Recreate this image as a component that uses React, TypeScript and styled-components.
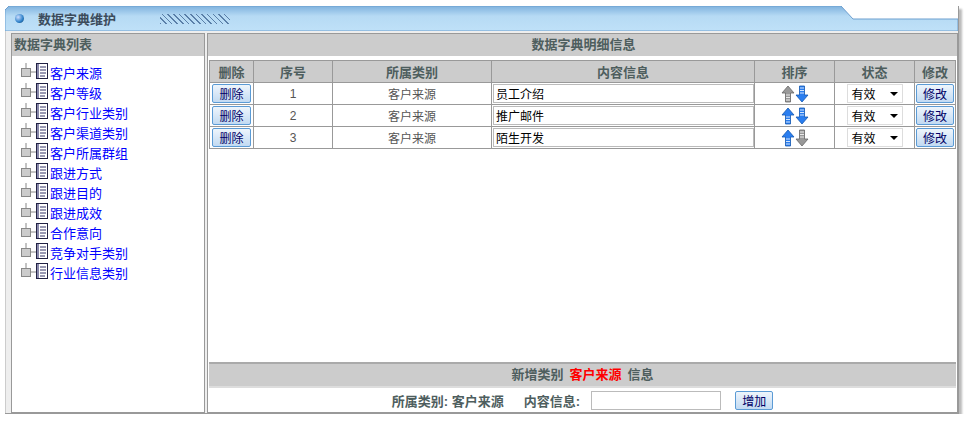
import React from 'react';
import styled, { createGlobalStyle } from 'styled-components';

const Global = createGlobalStyle`
  body { margin: 0; background: #fff; font-family: "Liberation Sans", "Noto Sans CJK SC", sans-serif; font-size: 12px; }
`;

const rows = [
  { id: 1, type: '客户来源', content: '员工介绍', up: false, down: true },
  { id: 2, type: '客户来源', content: '推广邮件', up: true, down: true },
  { id: 3, type: '客户来源', content: '陌生开发', up: true, down: false },
];

const treeItems = ['客户来源', '客户等级', '客户行业类别', '客户渠道类别', '客户所属群组', '跟进方式', '跟进目的', '跟进成效', '合作意向', '竞争对手类别', '行业信息类别'];

const Frame = styled.div`
  margin: 6px 0 0 5px;
  width: 953px;
  height: 407px;
  border-right: 1px solid #999;
  border-bottom: 1px solid #999;
  box-shadow: 3px 3px 2px #bbb;
  display: flex;
  flex-direction: column;
  overflow: hidden;
`;

const TitleBar = styled.div`
  height: 25px;
  position: relative;
  display: flex;
  align-items: center;
  padding-left: 10px;
  gap: 10px;
  background: #fff;
`;

const TitleTab = styled.svg`
  position: absolute;
  left: 0;
  top: 0;
  width: 953px;
  height: 25px;
`;

const Orb = styled.div`
  position: relative;
  width: 9px;
  height: 9px;
  border-radius: 50%;
  background: radial-gradient(circle at 35% 35%, #cdf, #2a7fc8 60%, #135);
`;

const TitleText = styled.span`
  position: relative;
  font-weight: bold;
  font-size: 13px;
  color: #3c4c5c;
  margin-left: 4px;
`;

const Hatch = styled.div`
  position: relative;
  margin-left: 34px;
  width: 70px;
  height: 10px;
  background: repeating-linear-gradient(45deg, #5a7fa8 0 1px, transparent 1px 4px);
`;

const Body = styled.div`
  flex: 1;
  display: flex;
  gap: 2px;
  padding: 2px 0 0 5px;
  background: #eee;
  border-left: 1px solid #ccc;
`;

const Panel = styled.div<{ w?: number }>`
  ${(p) => (p.w ? `width: ${p.w}px;` : 'flex: 1;')}
  border: 1px solid #999;
  background: #fff;
  display: flex;
  flex-direction: column;
`;

const PanelHead = styled.div<{ center?: boolean }>`
  height: 22px;
  line-height: 22px;
  background: #ccc;
  border-bottom: 2px solid #fff;
  font-weight: bold;
  font-size: 13px;
  color: #4e5e5e;
  padding-left: 2px;
  text-align: ${(p) => (p.center ? 'center' : 'left')};
`;

const Tree = styled.div`
  padding: 4px 0 0 8px;
`;

const TreeRow = styled.div`
  height: 20px;
  display: flex;
  align-items: center;
  color: #00f;
  font-size: 13px;
`;

const Table = styled.table`
  border-collapse: collapse;
  margin: 2px 0 0 1px;
  width: calc(100% - 2px);
  td, th { border: 1px solid #999; padding: 0; height: 21px; }
`;

const Th = styled.th`
  background: #ccc;
  color: #4e5e5e;
  font-size: 13px;
`;

const Td = styled.td`
  text-align: center;
  color: #555;
`;

const Btn = styled.button`
  font-family: inherit;
  font-size: 12px;
  color: #000066;
  height: 19px;
  padding: 0 6px;
  border: 1px solid #5b9bd5;
  border-radius: 2px;
  background: linear-gradient(#eef5fc, #c2daf2);
`;

const TextBox = styled.input`
  width: 255px;
  height: 17px;
  border: 1px solid #bbb;
  font-size: 12px;
  font-family: inherit;
  padding: 0 2px;
  display: block;
  margin-left: 1px;
`;

const Sel = styled.div`
  margin: 0 auto;
  width: 46px;
  height: 17px;
  border: 1px solid #ddd;
  display: flex;
  align-items: center;
  justify-content: space-between;
  padding: 0 4px;
  color: #000;
  &::after { content: ''; border: 4px solid transparent; border-top: 4px solid #000; margin-top: 4px; }
`;

const Spacer = styled.div`
  flex: 1;
`;

const AddBar = styled.div`
  border-top: 2px solid #aaa;
  margin: 0 1px;
`;

const AddHead = styled.div`
  height: 22px;
  line-height: 22px;
  background: #ccc;
  text-align: center;
  font-weight: bold;
  font-size: 13px;
  color: #4e5e5e;
  border-bottom: 2px solid #ddd;
`;

const Red = styled.span`
  color: #f00;
  margin: 0 6px;
`;

const AddForm = styled.div`
  height: 24px;
  display: flex;
  align-items: center;
  justify-content: center;
  gap: 10px;
  font-weight: bold;
  font-size: 13px;
  color: #4e5e5e;
`;

const Arrow = ({ dir, on }: { dir: 'up' | 'down'; on: boolean }) => {
  const c = on ? '#2a7ef0' : '#999';
  return (
    <svg width="14" height="18" viewBox="0 0 14 18" style={{ verticalAlign: 'middle' }}>
      <g transform={dir === 'down' ? 'rotate(180 7 9)' : undefined}>
        <path d="M7 1 L13 8 H9.5 V17 H4.5 V8 H1 Z" fill={c} stroke={on ? '#1458b0' : '#666'} strokeWidth="0.8" />
        <path d="M5 10 H9 M5 12.5 H9 M5 15 H9" stroke="#fff" strokeWidth="0.8" />
      </g>
    </svg>
  );
};

const DocIcon = () => (
  <svg width="30" height="18" viewBox="0 0 30 18">
    <path d="M6 0 V9 H16" stroke="#888" fill="none" />
    <rect x="1.5" y="5.5" width="9" height="8" fill="#ccc" stroke="#888" />
    <rect x="16.5" y="0.5" width="11" height="15" fill="#fff" stroke="#224" />
    <rect x="17" y="1" width="2" height="14" fill="#88a" />
    <path d="M20 4 H26 M20 7 H26 M20 10 H26 M20 13 H25" stroke="#336" />
  </svg>
);

export default function App() {
  return (
    <Frame>
      <Global />
      <TitleBar>
        <TitleTab viewBox="0 0 953 25" preserveAspectRatio="none">
          <defs>
            <linearGradient id="tb" x1="0" y1="0" x2="0" y2="1">
              <stop offset="0" stopColor="#7fb2de" />
              <stop offset="0.4" stopColor="#b6daf4" />
              <stop offset="1" stopColor="#bfe1f8" />
            </linearGradient>
          </defs>
          <path d="M4 0 H836 L848 13 H953 V25 H0 V4 Z" fill="url(#tb)" stroke="#6d9fcf" />
        </TitleTab>
        <Orb />
        <TitleText>数据字典维护</TitleText>
        <Hatch />
      </TitleBar>
      <Body>
        <Panel w={192}>
          <PanelHead>数据字典列表</PanelHead>
          <Tree>
            {treeItems.map((t) => (
              <TreeRow key={t}>
                <DocIcon />
                <span>{t}</span>
              </TreeRow>
            ))}
          </Tree>
        </Panel>
        <Panel>
          <PanelHead center>数据字典明细信息</PanelHead>
          <Table>
            <thead>
              <tr>
                <Th style={{ width: 43 }}>删除</Th>
                <Th style={{ width: 78 }}>序号</Th>
                <Th style={{ width: 158 }}>所属类别</Th>
                <Th style={{ width: 260 }}>内容信息</Th>
                <Th style={{ width: 79 }}>排序</Th>
                <Th style={{ width: 79 }}>状态</Th>
                <Th>修改</Th>
              </tr>
            </thead>
            <tbody>
              {rows.map((r) => (
                <tr key={r.id}>
                  <Td><Btn>删除</Btn></Td>
                  <Td>{r.id}</Td>
                  <Td>{r.type}</Td>
                  <Td><TextBox defaultValue={r.content} /></Td>
                  <Td><Arrow dir="up" on={r.up} /><Arrow dir="down" on={r.down} /></Td>
                  <Td><Sel>有效</Sel></Td>
                  <Td><Btn>修改</Btn></Td>
                </tr>
              ))}
            </tbody>
          </Table>
          <Spacer />
          <AddBar>
            <AddHead>新增类别<Red>客户来源</Red>信息</AddHead>
            <AddForm>
              <span>所属类别: 客户来源</span>
              <span style={{ marginLeft: 10 }}>内容信息:</span>
              <TextBox style={{ width: 124 }} />
              <Btn style={{ marginLeft: 4 }}>增加</Btn>
            </AddForm>
          </AddBar>
        </Panel>
      </Body>
    </Frame>
  );
}
